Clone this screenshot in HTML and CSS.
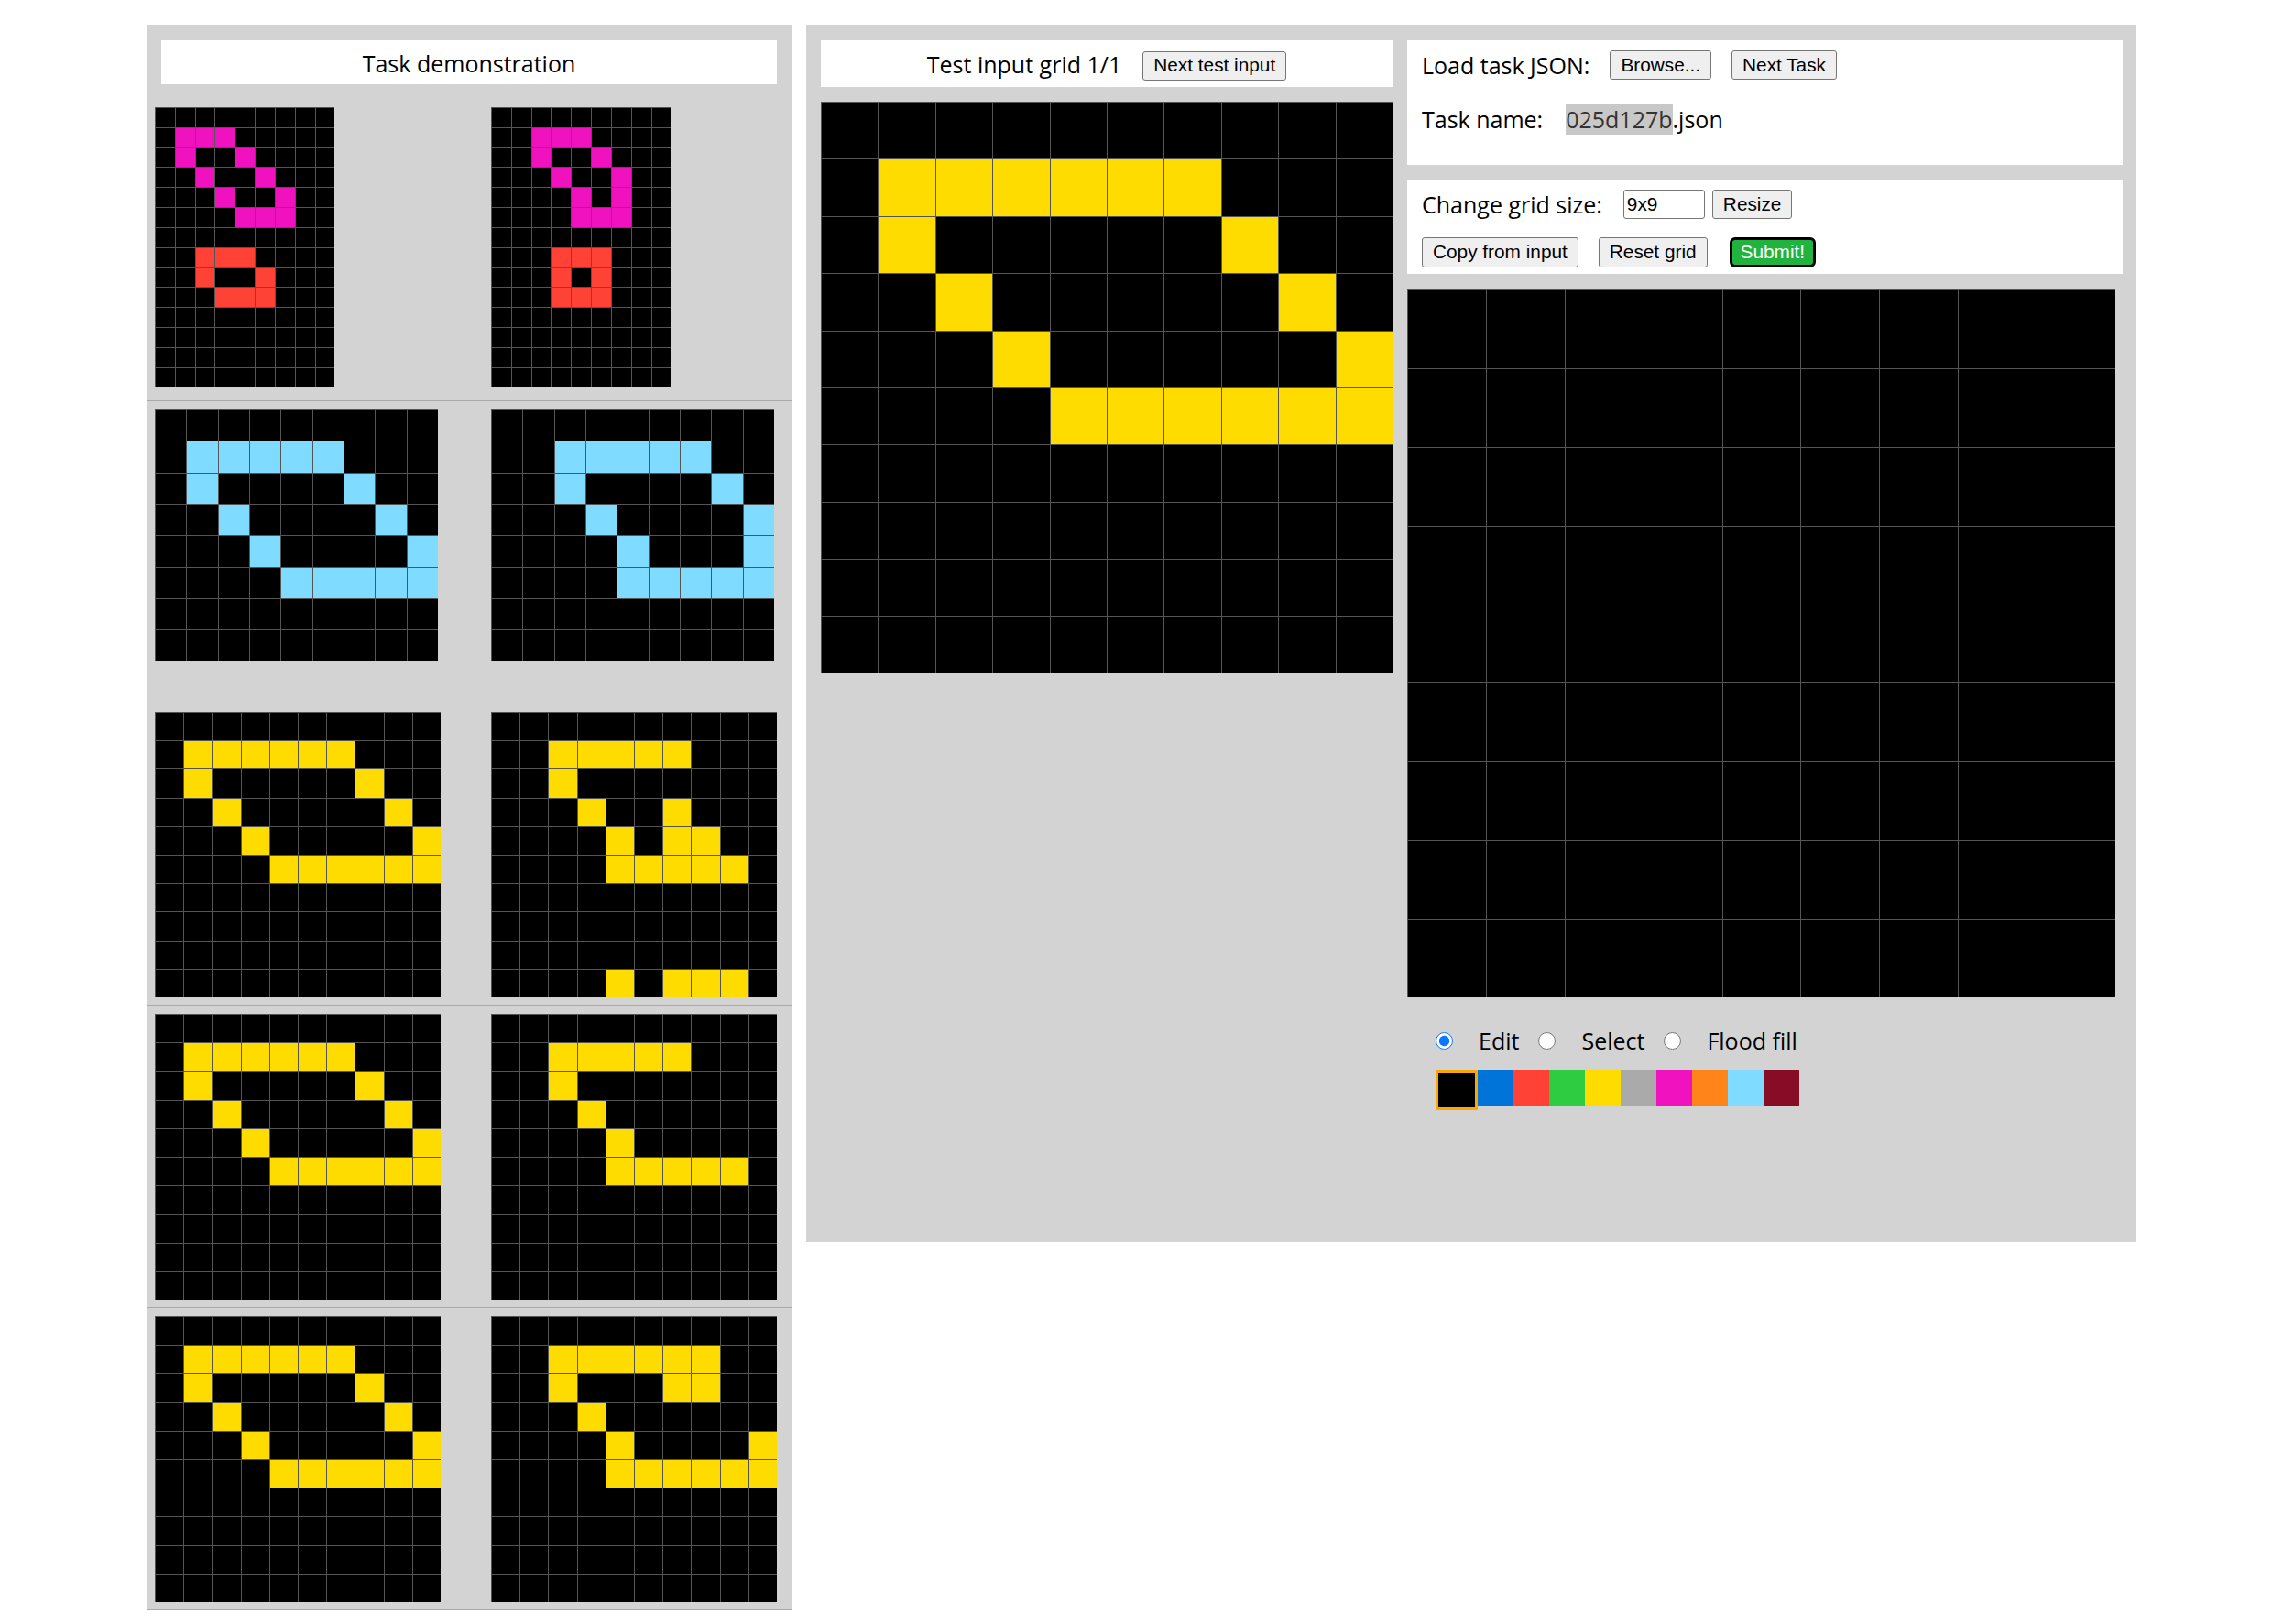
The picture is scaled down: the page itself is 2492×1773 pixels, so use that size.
FILE: index.html
```html
<!DOCTYPE html>
<html lang="en">
<head>
<meta charset="utf-8">
<title>ARC testing interface</title>
<link rel="stylesheet" href="styles.css">
</head>
<body>
<div class="page">
  <section class="demo">
    <div class="demo-title">Task demonstration</div>
    <div class="pair">
      <div class="pair-in"><div class="grid" data-grid="p1in" data-pitch="21.84"></div></div>
      <div class="pair-out"><div class="grid" data-grid="p1out" data-pitch="21.84"></div></div>
    </div>
    <div class="pair">
      <div class="pair-in"><div class="grid" data-grid="p2in" data-pitch="34.32"></div></div>
      <div class="pair-out"><div class="grid" data-grid="p2out" data-pitch="34.32"></div></div>
    </div>
    <div class="pair">
      <div class="pair-in"><div class="grid" data-grid="base" data-pitch="31.2"></div></div>
      <div class="pair-out"><div class="grid" data-grid="p3out" data-pitch="31.2"></div></div>
    </div>
    <div class="pair">
      <div class="pair-in"><div class="grid" data-grid="base" data-pitch="31.2"></div></div>
      <div class="pair-out"><div class="grid" data-grid="p4out" data-pitch="31.2"></div></div>
    </div>
    <div class="pair">
      <div class="pair-in"><div class="grid" data-grid="base" data-pitch="31.2"></div></div>
      <div class="pair-out"><div class="grid" data-grid="p5out" data-pitch="31.2"></div></div>
    </div>
  </section>

  <section class="workspace">
    <div class="test-col">
      <div class="test-head">
        <span>Test input grid 1/1</span>
        <button class="btn head-btn">Next test input</button>
      </div>
      <div class="grid test-grid" data-grid="base" data-pitch="62.4"></div>
    </div>

    <div class="editor-col">
      <div class="box box-load">
        <div class="row">
          <span>Load task JSON:</span>
          <button class="btn ml">Browse...</button>
          <button class="btn ml">Next Task</button>
        </div>
        <div class="row row-name">
          <span>Task name:</span>
          <span class="task-name"><span class="sel">025d127b</span>.json</span>
        </div>
      </div>

      <div class="box box-size">
        <div class="row">
          <span>Change grid size:</span>
          <input class="size-input" type="text" value="9x9">
          <button class="btn resize">Resize</button>
        </div>
        <div class="row row-actions">
          <button class="btn">Copy from input</button>
          <button class="btn ml">Reset grid</button>
          <button class="btn submit">Submit!</button>
        </div>
      </div>

      <div class="grid out-grid" data-grid="output" data-pitch="85.9"></div>

      <div class="tools">
        <input class="radio" type="radio" name="tool" id="tool_edit" checked>
        <label class="tool-label" for="tool_edit">Edit</label>
        <input class="radio" type="radio" name="tool" id="tool_select">
        <label class="tool-label" for="tool_select">Select</label>
        <input class="radio" type="radio" name="tool" id="tool_fill">
        <label class="tool-label" for="tool_fill">Flood fill</label>
      </div>

      <div class="palette">
        <div class="swatch s0 selected"></div>
        <div class="swatch s1"></div>
        <div class="swatch s2"></div>
        <div class="swatch s3"></div>
        <div class="swatch s4"></div>
        <div class="swatch s5"></div>
        <div class="swatch s6"></div>
        <div class="swatch s7"></div>
        <div class="swatch s8"></div>
        <div class="swatch s9"></div>
      </div>
    </div>
  </section>
</div>
<script src="script.js"></script>
</body>
</html>
```

FILE: styles.css
```css
html, body {
  margin: 0;
  padding: 0;
  background: #ffffff;
}

body {
  font-family: "Open Sans", "Noto Sans", sans-serif;
  font-size: 25px;
  color: #000;
}

.page {
  display: flex;
  justify-content: center;
  align-items: flex-start;
  gap: 16px;
  padding-top: 27px;
}

/* ---------- demonstration column ---------- */
.demo {
  width: 704px;
  background: #d3d3d3;
  flex: none;
}

.demo-title {
  margin: 17px 16px 16px;
  height: 48px;
  line-height: 50px;
  background: #fff;
  text-align: center;
}

.pair {
  box-sizing: border-box;
  height: 330px;
  display: flex;
  align-items: flex-start;
  padding: 9px 0 0 9px;
  border-bottom: 1px solid #a9a9a9;
}

.pair-in {
  width: 367px;
  flex: none;
}

/* ---------- grids ---------- */
.grid {
  display: grid;
  gap: 1px;
  padding: 1px 0 0 1px;
  background: #555;
  width: max-content;
}

.cell { background: #000; }

.s0 { background: #000000; }
.s1 { background: #0074D9; }
.s2 { background: #FF4136; }
.s3 { background: #2ECC40; }
.s4 { background: #FFDC00; }
.s5 { background: #AAAAAA; }
.s6 { background: #F012BE; }
.s7 { background: #FF851B; }
.s8 { background: #7FDBFF; }
.s9 { background: #870C25; }

/* ---------- workspace ---------- */
.workspace {
  box-sizing: border-box;
  width: 1452px;
  height: 1329px;
  flex: none;
  background: #d3d3d3;
  display: flex;
  align-items: flex-start;
  gap: 16px;
  padding: 17px 15px 0 16px;
}

.test-col {
  width: 624px;
  flex: none;
}

.test-head {
  height: 51px;
  background: #fff;
  display: flex;
  justify-content: center;
  align-items: center;
}

.test-grid {
  margin-top: 16px;
}

.editor-col {
  width: 781px;
  flex: none;
}

.box {
  box-sizing: border-box;
  background: #fff;
  padding-left: 16px;
  padding-right: 16px;
}

.box-load {
  height: 136px;
  padding-top: 10px;
}

.box-size {
  height: 102px;
  margin-top: 17px;
  padding-top: 9px;
}

.row {
  display: flex;
  align-items: center;
  height: 34px;
}

.row-name {
  margin-top: 25px;
}

.row-actions {
  margin-top: 18px;
}

.task-name {
  margin-left: 25px;
}

.sel {
  background: #c8c8c8;
  color: #333;
}

/* ---------- buttons & inputs ---------- */
.btn {
  font-family: "Liberation Sans", Arial, sans-serif;
  font-size: 20.8px;
  color: #000;
  height: 32px;
  padding: 0 11px;
  background: #efefef;
  border: 1px solid #767676;
  border-radius: 3px;
  line-height: 1;
}

.ml { margin-left: 22px; }

.head-btn {
  margin-left: 23px;
  margin-top: 4px;
}

.size-input {
  box-sizing: border-box;
  width: 89px;
  height: 32px;
  margin-left: 23px;
  padding: 0 3px;
  font-family: "Liberation Sans", Arial, sans-serif;
  font-size: 20.8px;
  border: 1px solid #767676;
  border-radius: 3px;
  background: #fff;
  color: #000;
}

.resize {
  margin-left: 8px;
}

.row-actions .btn {
  height: 33px;
}

.submit {
  height: 34px;
  margin-left: 24px;
  padding: 0 9px;
  background: #20b33d;
  color: #fff;
  border: 3px solid #000;
  border-radius: 6px;
}

.out-grid {
  margin-top: 17px;
}

/* ---------- tools & palette ---------- */
.tools {
  margin-top: 30px;
  padding-left: 31px;
  height: 34px;
  display: flex;
  align-items: center;
}

.radio {
  width: 19px;
  height: 19px;
  margin: 0 28px 0 0;
  accent-color: #0a78ff;
}

.tool-label {
  margin-right: 21px;
}

.palette {
  margin-top: 15px;
  padding-left: 31px;
  display: flex;
  align-items: flex-start;
}

.swatch {
  width: 39px;
  height: 39px;
  flex: none;
}

.swatch.selected {
  width: 40px;
  height: 38px;
  border: 3px solid #ffa500;
}
```

FILE: script.js
```js
var BASE = [
  "0000000000",
  "0444444000",
  "0400000400",
  "0040000040",
  "0004000004",
  "0000444444",
  "0000000000",
  "0000000000",
  "0000000000",
  "0000000000"
];

var GRIDS = {
  p1in: [
    "000000000",
    "066600000",
    "060060000",
    "006006000",
    "000600600",
    "000066600",
    "000000000",
    "002220000",
    "002002000",
    "000222000",
    "000000000",
    "000000000",
    "000000000",
    "000000000"
  ],
  p1out: [
    "000000000",
    "006660000",
    "006006000",
    "000600600",
    "000060600",
    "000066600",
    "000000000",
    "000222000",
    "000202000",
    "000222000",
    "000000000",
    "000000000",
    "000000000",
    "000000000"
  ],
  p2in: [
    "000000000",
    "088888000",
    "080000800",
    "008000080",
    "000800008",
    "000088888",
    "000000000",
    "000000000"
  ],
  p2out: [
    "000000000",
    "008888800",
    "008000080",
    "000800008",
    "000080008",
    "000088888",
    "000000000",
    "000000000"
  ],
  base: BASE,
  p3out: [
    "0000000000",
    "0044444000",
    "0040000000",
    "0004004000",
    "0000404400",
    "0000444440",
    "0000000000",
    "0000000000",
    "0000000000",
    "0000404440"
  ],
  p4out: [
    "0000000000",
    "0044444000",
    "0040000000",
    "0004000000",
    "0000400000",
    "0000444440",
    "0000000000",
    "0000000000",
    "0000000000",
    "0000000000"
  ],
  p5out: [
    "0000000000",
    "0044444400",
    "0040004400",
    "0004000000",
    "0000400004",
    "0000444444",
    "0000000000",
    "0000000000",
    "0000000000",
    "0000000000"
  ],
  output: [
    "000000000",
    "000000000",
    "000000000",
    "000000000",
    "000000000",
    "000000000",
    "000000000",
    "000000000",
    "000000000"
  ]
};

document.querySelectorAll(".grid").forEach(function (g) {
  var rows = GRIDS[g.dataset.grid];
  var pitch = parseFloat(g.dataset.pitch);
  var size = (pitch - 1).toFixed(2) + "px";
  g.style.gridTemplateColumns = "repeat(" + rows[0].length + ", " + size + ")";
  g.style.gridTemplateRows = "repeat(" + rows.length + ", " + size + ")";
  rows.forEach(function (r) {
    r.split("").forEach(function (c) {
      var d = document.createElement("div");
      d.className = "cell s" + c;
      g.appendChild(d);
    });
  });
});
```
